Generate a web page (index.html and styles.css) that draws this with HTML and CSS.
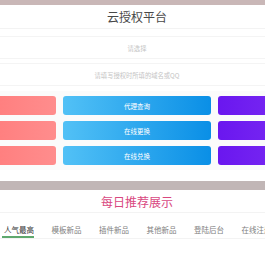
FILE: index.html
```html
<!DOCTYPE html>
<html lang="zh-CN">
<head>
  <meta charset="UTF-8">
  <title>云授权平台</title>
  <meta name="viewport" content="width=device-width, initial-scale=1.0">
  <link rel="stylesheet" href="styles.css">
</head>
<body>
  <div class="topbar"></div>

  <div class="header">云授权平台</div>

  <div class="field">请选择</div>
  <div class="field">请填写授权时所填的域名或QQ</div>

  <div class="panel">
    <div class="btn-grid">
      <button class="btn red"></button>
      <button class="btn blue">代理查询</button>
      <button class="btn purple"></button>
      <button class="btn red"></button>
      <button class="btn blue">在线更换</button>
      <button class="btn purple"></button>
      <button class="btn red"></button>
      <button class="btn blue">在线兑换</button>
      <button class="btn purple"></button>
    </div>
  </div>

  <div class="divider-bar"></div>

  <div class="section-title">每日推荐展示</div>

  <div class="tabs">
    <span class="tab active">人气最高</span>
    <span class="tab">模板新品</span>
    <span class="tab">插件新品</span>
    <span class="tab">其他新品</span>
    <span class="tab">登陆后台</span>
    <span class="tab">在线注册</span>
  </div>
</body>
</html>
```

FILE: styles.css
```css
* { box-sizing: border-box; }

body {
  margin: 0;
  padding: 0;
  background: #fff;
  color: #333;
  font-family: "Noto Sans CJK SC", "Noto Sans", sans-serif;
  overflow: hidden;
}

.topbar {
  height: 5px;
  background: #c9b7b7;
}

.header {
  height: 24px;
  line-height: 24px;
  text-align: center;
  font-size: 12px;
  color: #484848;
  padding-left: 9px;
  border-bottom: 1px solid #f3f3f3;
}

.field {
  height: 23px;
  line-height: 23px;
  margin-top: 7px;
  text-align: center;
  font-size: 6.3px;
  color: #c4c4c4;
  padding-left: 9px;
  border-top: 1px solid #f4f4f4;
  border-bottom: 1px solid #f4f4f4;
}

.field + .field {
  margin-top: 4px;
}

.panel {
  margin-top: 5px;
  padding: 5px 0 5px;
  background: #fbfbfb;
}

.btn-grid {
  width: 458px;
  margin-left: -92px;
  display: grid;
  grid-template-columns: repeat(3, 148px);
  column-gap: 7px;
  row-gap: 6px;
}

.btn {
  height: 19px;
  border: none;
  border-radius: 3px;
  color: #fff;
  font-family: inherit;
  font-size: 6.5px;
  padding: 0;
}

.red { background: linear-gradient(90deg, #ff6a6a, #ff8d8d); }
.blue { background: linear-gradient(90deg, #52c1f6, #0a8fe6); }
.purple { background: linear-gradient(90deg, #6a17ef, #8a3ef6); }

.divider-bar {
  margin-top: 11px;
  height: 9px;
  background: #c1b6b6;
}

.section-title {
  height: 23px;
  line-height: 23px;
  text-align: center;
  font-size: 12px;
  color: #d9487f;
  padding-left: 9px;
  border-bottom: 1px solid #f3f3f3;
}

.tabs {
  display: flex;
  padding-left: 2px;
  border-bottom: 1px solid #f3f3f3;
  white-space: nowrap;
}

.tab {
  flex: 0 0 47.5px;
  height: 25px;
  line-height: 25px;
  padding-top: 4px;
  font-size: 7.5px;
  color: #808080;
  text-align: left;
  padding-left: 2px;
}

.tab.active {
  color: #333;
  background: linear-gradient(#5ea86d, #5ea86d) no-repeat 0 100% / 32px 2px;
}
```
